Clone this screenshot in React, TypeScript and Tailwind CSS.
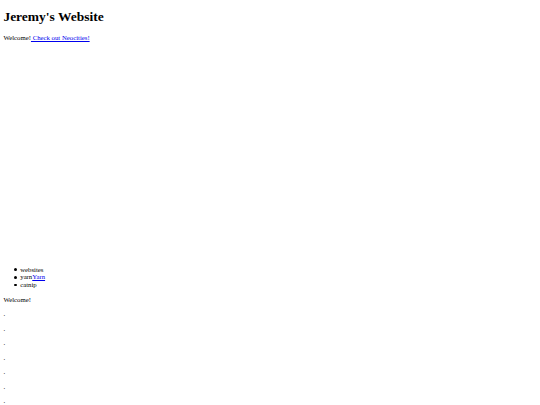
import React from 'react';

const dots = Array.from({ length: 8 });
const items: React.ReactNode[] = [
  'websites',
  <>
    yarn<a href="#" className="text-[#0000ee] underline">Yarn</a>
  </>,
  'catnip',
];

const App: React.FC = () => {
  return (
    <div className="min-h-[405px] bg-white px-[3.375px] text-black font-['Liberation_Serif','Times_New_Roman',serif] text-[6.75px] leading-[7.76px] flex flex-col items-start">
      {/* Heading */}
      <h1 className="mt-[9.05px] text-[13.5px] leading-[15.5px] font-bold">Jeremy's Website</h1>

      <p className="mt-[9.05px]">
        Welcome!
        <a href="#" className="text-[#0000ee] underline"> Check out Neocities!</a>
      </p>

      {/* List */}
      <ul className="mt-[224.2px] list-none pl-[16.875px]">
        {items.map((item, i) => (
          <li key={i} className="relative">
            <span className="absolute left-[-6px] top-[2.6px] w-[2.6px] h-[2.6px] rounded-full bg-black" />
            {item}
          </li>
        ))}
      </ul>

      <p className="mt-[6.75px]">Welcome!</p>

      {dots.map((_, i) => (
        <p key={i} className="mt-[6.75px]">.</p>
      ))}
    </div>
  );
};

export default App;
